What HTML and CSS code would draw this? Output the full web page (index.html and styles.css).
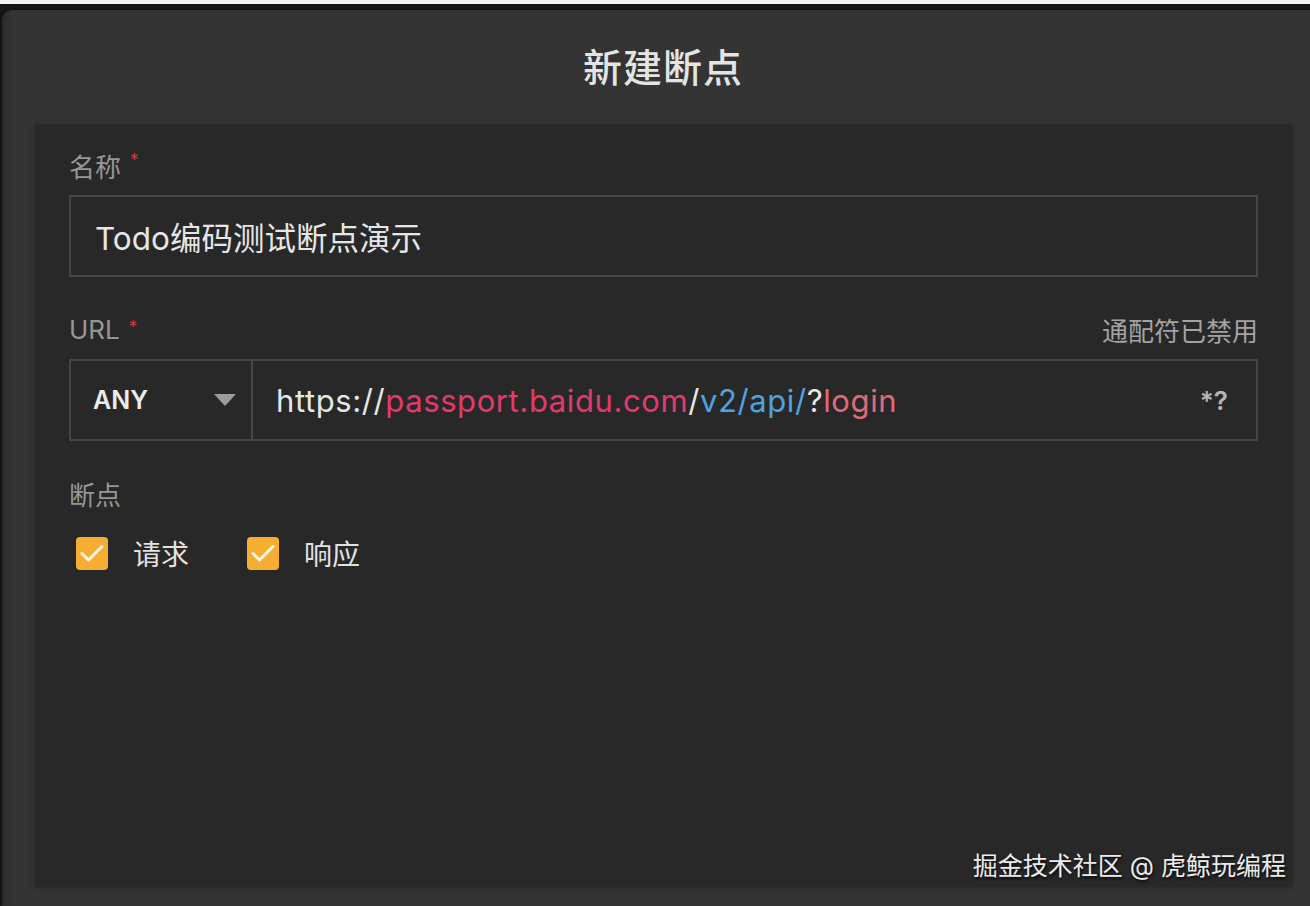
FILE: index.html
```html
<!DOCTYPE html>
<html lang="zh-CN">
<head>
    <meta charset="UTF-8">
    <meta name="viewport" content="width=device-width, initial-scale=1.0">
    <title>新建断点</title>
    <link rel="stylesheet" href="styles.css">
</head>
<body>
    <div class="dialog">
        <div class="dialog-header">新建断点</div>

        <div class="dialog-body">
            <div class="field">
                <div class="field-label">
                    <span>名称<i class="required">*</i></span>
                </div>
                <div class="text-input">Todo编码测试断点演示</div>
            </div>

            <div class="field">
                <div class="field-label">
                    <span>URL<i class="required">*</i></span>
                    <span class="hint">通配符已禁用</span>
                </div>
                <div class="url-row">
                    <div class="method-select">
                        <span>ANY</span>
                        <span class="caret"></span>
                    </div>
                    <div class="url-input">
                        <span class="url-text">https://<span class="host">passport.baidu.com</span>/<span class="path">v2/api/</span>?<span class="query">login</span></span>
                        <span class="wildcard">*?</span>
                    </div>
                </div>
            </div>

            <div class="field">
                <div class="field-label">
                    <span>断点</span>
                </div>
                <div class="checks">
                    <label class="check">
                        <span class="box">
                            <svg viewBox="0 0 32 32" width="32" height="32"><polyline points="6,16.5 12.5,23 26,9.5" /></svg>
                        </span>
                        请求
                    </label>
                    <label class="check">
                        <span class="box">
                            <svg viewBox="0 0 32 32" width="32" height="32"><polyline points="6,16.5 12.5,23 26,9.5" /></svg>
                        </span>
                        响应
                    </label>
                </div>
            </div>

            <div class="watermark">掘金技术社区 @ 虎鲸玩编程</div>
        </div>
    </div>
</body>
</html>
```

FILE: styles.css
```css
html {
    background-color: #141414;
}

body {
    margin: 0;
    height: 902px;
    border-top: 4px solid #f2f2f2;
    background-color: #141414;
    font-family: Inter, "Noto Sans CJK SC", sans-serif;
    overflow: hidden;
}

.dialog {
    margin: 6px 0 0 2px;
    height: 896px;
    background-color: #343434;
    border-radius: 10px 0 0 0;
    box-shadow: inset 8px 0 8px -6px rgba(0, 0, 0, 0.25);
    display: flex;
    flex-direction: column;
}

.dialog-header {
    height: 110px;
    padding: 0 0 4px 14px;
    display: flex;
    align-items: center;
    justify-content: center;
    font-size: 39px;
    font-weight: 500;
    color: #e4e4e4;
    letter-spacing: 1px;
}

.dialog-body {
    position: relative;
    height: 763px;
    margin: 0 18px 0 33px;
    padding: 23px 34px 0;
    box-sizing: border-box;
    background-color: #282828;
    box-shadow: 0 1px 6px rgba(0, 0, 0, 0.25);
}

.field + .field {
    margin-top: 34px;
}

.field-label {
    display: flex;
    justify-content: space-between;
    align-items: center;
    height: 36px;
    margin-bottom: 12px;
    font-size: 26px;
    color: #979797;
}

.required {
    font-style: normal;
    color: #e0352f;
    font-size: 17px;
    vertical-align: top;
    position: relative;
    top: 3px;
    margin-left: 9px;
}

.hint {
    color: #a3a3a3;
}

.text-input {
    height: 82px;
    box-sizing: border-box;
    border: 2px solid #464646;
    display: flex;
    align-items: center;
    padding-left: 24px;
    font-size: 31.5px;
    color: #e6e6e6;
}

.url-row {
    display: flex;
    height: 82px;
    border: 2px solid #464646;
    box-sizing: border-box;
}

.method-select {
    width: 182px;
    flex-shrink: 0;
    box-sizing: border-box;
    border-right: 2px solid #464646;
    display: flex;
    align-items: center;
    justify-content: space-between;
    padding: 0 15px 0 22px;
    font-size: 25px;
    font-weight: 600;
    color: #ececec;
}

.caret {
    width: 0;
    height: 0;
    border-left: 11px solid transparent;
    border-right: 11px solid transparent;
    border-top: 12px solid #9c9c9c;
}

.url-input {
    flex: 1;
    display: flex;
    align-items: center;
    justify-content: space-between;
    padding: 0 28px 0 23px;
    font-size: 31px;
    letter-spacing: 0.6px;
    color: #e6e6e6;
}

.host {
    color: #e33a6c;
}

.path {
    color: #4fa3e0;
}

.query {
    color: #df6b78;
}

.wildcard {
    font-size: 26px;
    font-weight: 600;
    letter-spacing: 0;
    color: #b5b5b5;
}

.checks {
    display: flex;
    gap: 58px;
    padding: 10px 0 0 7px;
}

.check {
    display: flex;
    align-items: center;
    gap: 25px;
    font-size: 28px;
    color: #e2e2e2;
}

.box {
    width: 32px;
    height: 33px;
    border-radius: 4px;
    background-color: #f5ae31;
    display: flex;
    align-items: center;
    justify-content: center;
}

.box polyline {
    fill: none;
    stroke: #fff8ea;
    stroke-width: 3;
    stroke-linecap: round;
    stroke-linejoin: round;
}

.watermark {
    position: absolute;
    right: 6px;
    bottom: 5px;
    font-size: 25px;
    color: #ececec;
    text-shadow: 1px 2px 3px rgba(0, 0, 0, 0.8);
}
```
